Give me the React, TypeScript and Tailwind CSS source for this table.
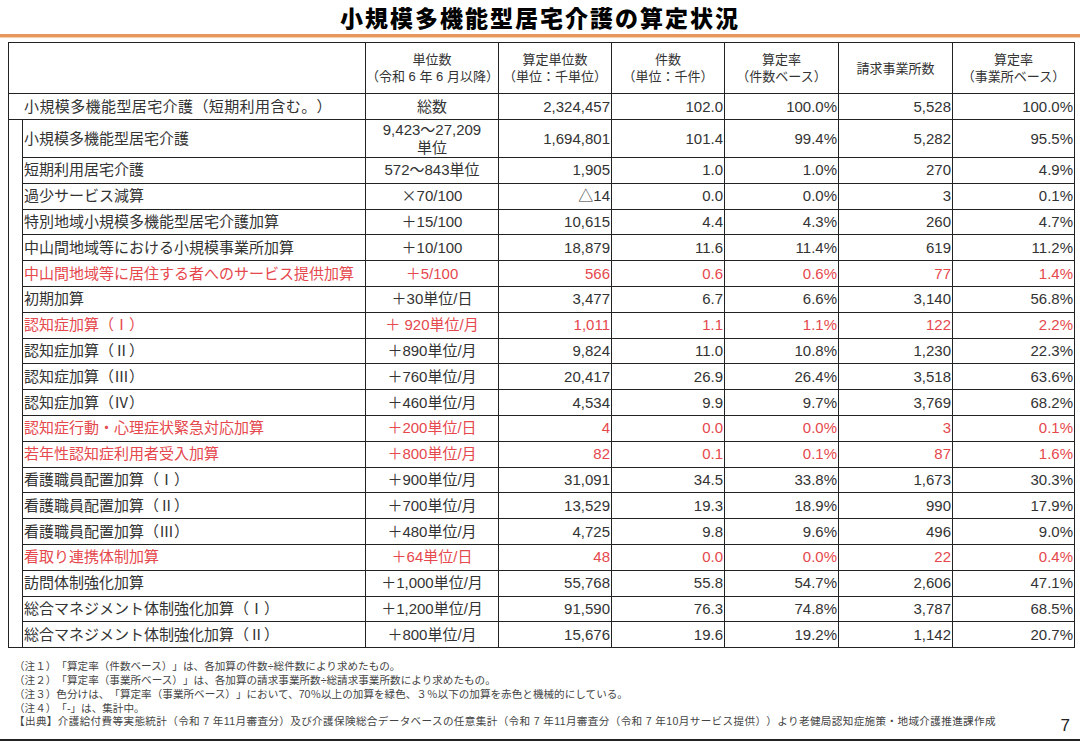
const FONT = "font-['Liberation_Sans','Noto_Sans_CJK_JP',sans-serif]";

type Row = {
  label: string;
  unit: React.ReactNode;
  values: string[];
  red?: boolean;
};

// 表データ
const rows: Row[] = [
  { label: '小規模多機能型居宅介護', unit: <>9,423～27,209<br />単位</>, values: ['1,694,801', '101.4', '99.4%', '5,282', '95.5%'] },
  { label: '短期利用居宅介護', unit: '572～843単位', values: ['1,905', '1.0', '1.0%', '270', '4.9%'] },
  { label: '過少サービス減算', unit: <><span className="font-['Noto_Sans_CJK_JP',sans-serif] leading-none">×</span>70/100</>, values: ['△14', '0.0', '0.0%', '3', '0.1%'] },
  { label: '特別地域小規模多機能型居宅介護加算', unit: '＋15/100', values: ['10,615', '4.4', '4.3%', '260', '4.7%'] },
  { label: '中山間地域等における小規模事業所加算', unit: '＋10/100', values: ['18,879', '11.6', '11.4%', '619', '11.2%'] },
  { label: '中山間地域等に居住する者へのサービス提供加算', unit: '＋5/100', values: ['566', '0.6', '0.6%', '77', '1.4%'], red: true },
  { label: '初期加算', unit: '＋30単位/日', values: ['3,477', '6.7', '6.6%', '3,140', '56.8%'] },
  { label: '認知症加算（Ⅰ）', unit: '＋ 920単位/月', values: ['1,011', '1.1', '1.1%', '122', '2.2%'], red: true },
  { label: '認知症加算（Ⅱ）', unit: '＋890単位/月', values: ['9,824', '11.0', '10.8%', '1,230', '22.3%'] },
  { label: '認知症加算（Ⅲ）', unit: '＋760単位/月', values: ['20,417', '26.9', '26.4%', '3,518', '63.6%'] },
  { label: '認知症加算（Ⅳ）', unit: '＋460単位/月', values: ['4,534', '9.9', '9.7%', '3,769', '68.2%'] },
  { label: '認知症行動・心理症状緊急対応加算', unit: '＋200単位/日', values: ['4', '0.0', '0.0%', '3', '0.1%'], red: true },
  { label: '若年性認知症利用者受入加算', unit: '＋800単位/月', values: ['82', '0.1', '0.1%', '87', '1.6%'], red: true },
  { label: '看護職員配置加算（Ⅰ）', unit: '＋900単位/月', values: ['31,091', '34.5', '33.8%', '1,673', '30.3%'] },
  { label: '看護職員配置加算（Ⅱ）', unit: '＋700単位/月', values: ['13,529', '19.3', '18.9%', '990', '17.9%'] },
  { label: '看護職員配置加算（Ⅲ）', unit: '＋480単位/月', values: ['4,725', '9.8', '9.6%', '496', '9.0%'] },
  { label: '看取り連携体制加算', unit: '＋64単位/日', values: ['48', '0.0', '0.0%', '22', '0.4%'], red: true },
  { label: '訪問体制強化加算', unit: '＋1,000単位/月', values: ['55,768', '55.8', '54.7%', '2,606', '47.1%'] },
  { label: '総合マネジメント体制強化加算（Ⅰ）', unit: '＋1,200単位/月', values: ['91,590', '76.3', '74.8%', '3,787', '68.5%'] },
  { label: '総合マネジメント体制強化加算（Ⅱ）', unit: '＋800単位/月', values: ['15,676', '19.6', '19.2%', '1,142', '20.7%'] },
];

const notes = [
  '（注１）「算定率（件数ベース）」は、各加算の件数÷総件数により求めたもの。',
  '（注２）「算定率（事業所ベース）」は、各加算の請求事業所数÷総請求事業所数により求めたもの。',
  '（注３）色分けは、「算定率（事業所ベース）」において、70％以上の加算を緑色、３％以下の加算を赤色と機械的にしている。',
  '（注４）「-」は、集計中。',
];

const source =
  '【出典】介護給付費等実態統計（令和 7 年11月審査分）及び介護保険総合データベースの任意集計（令和 7 年11月審査分（令和 7 年10月サービス提供））より老健局認知症施策・地域介護推進課作成';

const cell = 'border-[1.5px] border-[#222]';

const App = () => {
  return (
    <div className={`h-[743px] w-[1080px] overflow-hidden bg-white text-[#333] [text-spacing-trim:space-all] ${FONT}`}>
      {/* タイトル */}
      <h1 className="text-center font-['Noto_Sans_CJK_JP',sans-serif] text-[23px] font-black leading-[34px] tracking-[2px] text-black">
        小規模多機能型居宅介護の算定状況
      </h1>
      <div className="h-[3px] w-full bg-[#e8975c] shadow-[0_1px_1px_#f4c9a6]" />

      {/* 表 */}
      <div className="mt-[5px] pl-[8px]">
        <table className="w-[1066px] table-fixed border-collapse">
          <colgroup>
            <col className="w-[14px]" />
            <col className="w-[343px]" />
            <col className="w-[133px]" />
            <col className="w-[113px]" />
            <col className="w-[113px]" />
            <col className="w-[114px]" />
            <col className="w-[114px]" />
            <col className="w-[122px]" />
          </colgroup>
          <thead>
            <tr className="h-[51px] text-[13px] leading-[17px] [text-spacing-trim:normal]">
              <th colSpan={2} className={cell} />
              <th className={`${cell} whitespace-nowrap font-normal`}>単位数<br />（令和 6 年 6 月以降）</th>
              <th className={`${cell} whitespace-nowrap font-normal`}>算定単位数<br />（単位：千単位）</th>
              <th className={`${cell} font-normal`}>件数<br />（単位：千件）</th>
              <th className={`${cell} font-normal`}>算定率<br />（件数ベース）</th>
              <th className={`${cell} font-normal`}>請求事業所数</th>
              <th className={`${cell} font-normal`}>算定率<br />（事業所ベース）</th>
            </tr>
          </thead>
          <tbody className="text-[15px] leading-[18px]">
            <tr className="h-[26px]">
              <td colSpan={2} className={`${cell} whitespace-nowrap pl-[15px] tracking-[0.4px]`}>
                小規模多機能型居宅介護（短期利用含む。）
              </td>
              <td className={`${cell} text-center`}>総数</td>
              <td className={`${cell} pr-[1px] text-right`}>2,324,457</td>
              <td className={`${cell} pr-[1px] text-right`}>102.0</td>
              <td className={`${cell} pr-[1px] text-right`}>100.0%</td>
              <td className={`${cell} pr-[1px] text-right`}>5,528</td>
              <td className={`${cell} pr-[1px] text-right`}>100.0%</td>
            </tr>
            {rows.map((row, i) => (
              <tr
                key={row.label}
                className={i === 0 ? 'h-[38px]' : 'h-[25.8px]'}
                style={row.red ? { color: '#e5484d' } : undefined}
              >
                {i === 0 && (
                  <td rowSpan={rows.length} className="border-x-[1.5px] border-b-[1.5px] border-[#222]" />
                )}
                <td className={`${cell} whitespace-nowrap pl-[1px]`}>{row.label}</td>
                <td className={`${cell} text-center`}>
                  {i === 0 ? <div className="leading-[17.4px]">{row.unit}</div> : row.unit}
                </td>
                {row.values.map((v, j) => (
                  <td key={j} className={`${cell} pr-[1px] text-right`}>
                    {v}
                  </td>
                ))}
              </tr>
            ))}
          </tbody>
        </table>
      </div>

      {/* 注記 */}
      <div className="relative mt-[12px] h-[81px] border-b-2 border-[#222] pl-[14px] text-[10.6px] leading-[13.8px] text-[#444]">
        {notes.map(n => (
          <p key={n} className="whitespace-nowrap">{n}</p>
        ))}
        <p className="whitespace-nowrap tracking-[0.35px]">{source}</p>
        <span className="absolute right-[10px] bottom-[5px] text-[17px] leading-none text-[#222]">7</span>
      </div>
    </div>
  );
};

export default App;
